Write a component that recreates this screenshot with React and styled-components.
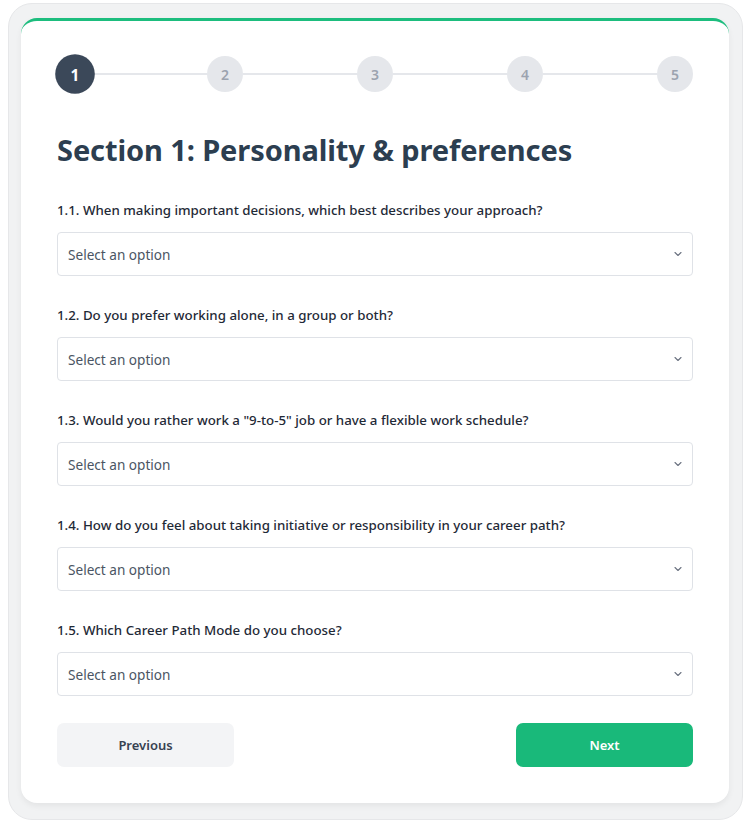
import React from "react";
import styled, { createGlobalStyle } from "styled-components";
import { ChevronDown } from "lucide-react";

const GlobalStyle = createGlobalStyle`
  html, body {
    margin: 0;
    padding: 0;
    background: #ffffff;
  }
  body {
    font-family: "Noto Sans", "Open Sans", Arial, sans-serif;
    -webkit-font-smoothing: antialiased;
  }
  * {
    box-sizing: border-box;
  }
`;

const questions = [
  "1.1. When making important decisions, which best describes your approach?",
  "1.2. Do you prefer working alone, in a group or both?",
  '1.3. Would you rather work a "9-to-5" job or have a flexible work schedule?',
  "1.4. How do you feel about taking initiative or responsibility in your career path?",
  "1.5. Which Career Path Mode do you choose?",
];

const steps = [1, 2, 3, 4, 5];

export default function App() {
  const current = 1;

  return (
    <>
      <GlobalStyle />
      <Frame>
        <Card>
          {/* Progress stepper */}
          <Stepper>
            {steps.map((n, i) => (
              <React.Fragment key={n}>
                {i > 0 && <Connector />}
                <Step $active={n === current}>{n}</Step>
              </React.Fragment>
            ))}
          </Stepper>

          <Title>Section 1: Personality &amp; preferences</Title>

          <Questions>
            {questions.map((q) => (
              <Field key={q}>
                <Label>{q}</Label>
                <SelectBox type="button">
                  <span>Select an option</span>
                  <ChevronDown size={12} strokeWidth={2.2} />
                </SelectBox>
              </Field>
            ))}
          </Questions>

          <Actions>
            <Button type="button">Previous</Button>
            <Button type="button" $primary>
              Next
            </Button>
          </Actions>
        </Card>
      </Frame>
    </>
  );
}

const Frame = styled.div`
  width: 735px;
  margin: 3px 0 0 8px;
  padding: 14px 13px 16px 12px;
  background: #f1f2f3;
  border: 1px solid #e6e7e9;
  border-radius: 24px;
`;

const Card = styled.div`
  background: #ffffff;
  border-top: 3px solid #1dbd7e;
  border-radius: 16px;
  padding: 33px 36px 36px;
  box-shadow: 0 3px 6px rgba(0, 0, 0, 0.06);
`;

const Stepper = styled.div`
  display: flex;
  align-items: center;
  height: 40px;
`;

const Connector = styled.div`
  flex: 1;
  height: 2px;
  background: #e5e7eb;
`;

const Step = styled.div`
  width: 36px;
  height: 36px;
  border-radius: 50%;
  display: flex;
  align-items: center;
  justify-content: center;
  font-size: 14px;
  font-weight: ${(p) => (p.$active ? 700 : 600)};
  color: ${(p) => (p.$active ? "#ffffff" : "#9ca3af")};
  background: ${(p) => (p.$active ? "#3b4859" : "#e5e7eb")};
  transform: ${(p) => (p.$active ? "scale(1.1)" : "none")};
  flex-shrink: 0;
`;

const Title = styled.h1`
  margin: 38px 0 0;
  font-size: 29px;
  line-height: 36px;
  font-weight: 700;
  color: #2c3e50;
  letter-spacing: -0.1px;
`;

const Questions = styled.div`
  margin-top: 32px;
  display: flex;
  flex-direction: column;
  gap: 29px;
`;

const Field = styled.div`
  display: flex;
  flex-direction: column;
  gap: 12px;
`;

const Label = styled.label`
  font-size: 13.3px;
  line-height: 20px;
  font-weight: 500;
  color: #1f2a37;
`;

const SelectBox = styled.button`
  height: 44px;
  width: 100%;
  display: flex;
  align-items: center;
  justify-content: space-between;
  padding: 0 8px 0 10px;
  background: #ffffff;
  border: 1px solid #dfe2e7;
  border-radius: 4px;
  font-family: inherit;
  font-size: 13.6px;
  color: #4b5563;
  text-align: left;
  cursor: pointer;

  svg {
    color: #6b7280;
  }
`;

const Actions = styled.div`
  margin-top: 27px;
  display: flex;
  justify-content: space-between;
`;

const Button = styled.button`
  width: 177px;
  height: 44px;
  border: none;
  border-radius: 7px;
  font-family: inherit;
  font-size: 13px;
  font-weight: 600;
  cursor: pointer;
  background: ${(p) => (p.$primary ? "#19b97a" : "#f3f4f6")};
  color: ${(p) => (p.$primary ? "#ffffff" : "#374151")};
`;
